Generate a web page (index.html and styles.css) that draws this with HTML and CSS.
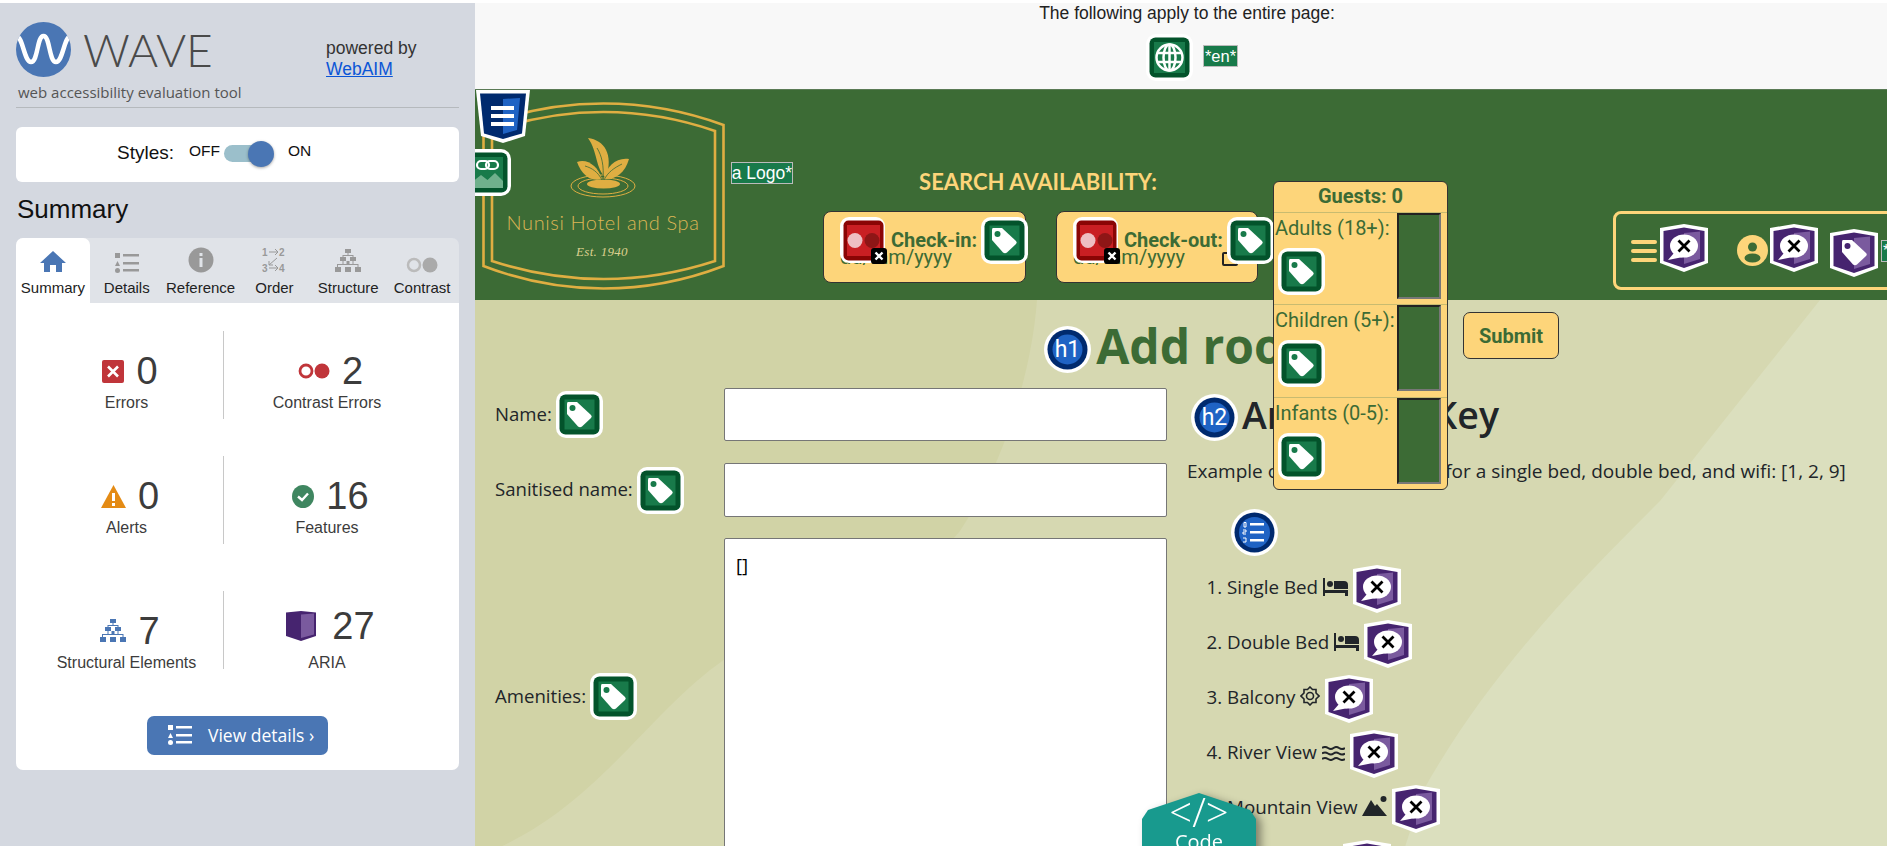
FILE: index.html
```html
<!DOCTYPE html>
<html lang="en">
<head>
  <meta charset="UTF-8" />
  <meta name="viewport" content="width=device-width, initial-scale=1.0" />
  <title>WAVE - Add room</title>
  <link rel="stylesheet" href="styles.css">
</head>
<body>
  <svg class="sprites" width="0" height="0" aria-hidden="true">
    <symbol id="i-tag" viewBox="0 0 47 47">
      <rect x="0" y="0" width="47" height="47" rx="10" fill="#fff"/>
      <rect x="3.500" y="3.500" width="40" height="40" rx="6" fill="#03532b"/>
      <rect x="8.500" y="8.500" width="30" height="30" fill="#187a4a"/>
      <path d="M12 11H21L35 24Q36.500 25.500 35 27L26 35.500Q24 37 22 35.500L11 23V13Q11 11 12 11Z" fill="#fff"/>
      <circle cx="16.500" cy="17" r="3" fill="#187a4a"/>
    </symbol>
    <symbol id="i-contrast" viewBox="0 0 47 47">
      <rect x="0" y="0" width="45" height="46" rx="9" fill="#fff"/>
      <rect x="3.500" y="3.500" width="40" height="40" rx="5" fill="#8a0505"/>
      <rect x="7" y="8" width="33" height="31" fill="#c91f23"/>
      <circle cx="15" cy="23.500" r="7.500" fill="#eebfc3"/>
      <circle cx="32" cy="23.500" r="7.500" fill="#8e1616"/>
      <rect x="31" y="31" width="16" height="16" rx="3" fill="#000"/>
      <path d="M35.500 35.500L42.500 42.500M42.500 35.500L35.500 42.500" stroke="#fff" stroke-width="2.400"/>
    </symbol>
    <symbol id="i-aria-x" viewBox="0 0 48 48">
      <path d="M0 4L24 0L48 4V39L24 48L0 39Z" fill="#fff"/>
      <path d="M3.500 7L24 3.500L44.500 7V37L24 44L3.500 37Z" fill="#46246f"/>
      <path d="M24 9L40 7.500V35L24 40Z" fill="#7a5a9e"/>
      <ellipse cx="24" cy="22" rx="14" ry="11.500" fill="#fff"/>
      <path d="M14 29L8 36L23 33Z" fill="#fff"/>
      <path d="M18.500 16.500L29.500 27.500M29.500 16.500L18.500 27.500" stroke="#000" stroke-width="2.800"/>
    </symbol>
    <symbol id="i-aria-tag" viewBox="0 0 48 48">
      <path d="M0 4L24 0L48 4V39L24 48L0 39Z" fill="#fff"/>
      <path d="M3.500 7L24 3.500L44.500 7V37L24 44L3.500 37Z" fill="#46246f"/>
      <path d="M24 9L40 7.500V35L24 40Z" fill="#7a5a9e"/>
      <path d="M13 11H22L36 24Q37.500 25.500 36 27L27 35.500Q25 37 23 35.500L12 23V13Q12 11 13 11Z" fill="#fff"/>
      <circle cx="17.500" cy="17" r="3" fill="#46246f"/>
    </symbol>
    <symbol id="i-list" viewBox="0 0 24 20">
      <rect x="0" y="0" width="5" height="5"/>
      <path d="M2.500 8L5 13H0Z"/>
      <circle cx="2.500" cy="17.500" r="2.500"/>
      <rect x="8" y="1" width="16" height="2.500"/>
      <rect x="8" y="9" width="16" height="2.500"/>
      <rect x="8" y="16" width="16" height="2.500"/>
    </symbol>
    <symbol id="i-tree" viewBox="0 0 26 24">
      <path d="M10 0h6v4h-6zM5 8h6v4H5zM15 8h6v4h-6zM0 18h6v5H0zM10 18h6v5h-6zM20 18h6v5h-6z"/>
      <path d="M12.500 4h1v2h5v2h-1V7h-9v1h-1V6h5zM7.500 12h1v3h3v-3h3v3h3v-3h1v3h5v3h-1v-2H3v2H2v-3h5.500z"/>
    </symbol>
  </svg>

  <aside class="wave-panel">
    <div class="brand">
      <div class="brand-main">
        <div class="brand-logo">
          <svg class="wave-circle" width="55" height="55" viewBox="0 0 55 55">
            <clipPath id="circle-clip"><circle cx="27.500" cy="27.500" r="27.500"/></clipPath>
            <circle cx="27.500" cy="27.500" r="27.500" fill="#4a76b4"/>
            <path clip-path="url(#circle-clip)" d="M0 14C7 14 8 40 15 40C22 40 21 14 27.500 14C34 14 33 40 40 40C47 40 48 14 55 14" fill="none" stroke="#fff" stroke-width="4.500"/>
          </svg>
          <span class="wave-name">WAVE</span>
        </div>
        <div class="wave-tag">web accessibility evaluation tool</div>
      </div>
      <div class="powered">powered by<br><a href="#">WebAIM</a></div>
    </div>

    <div class="styles-card">
      <span class="styles-label">Styles:</span>
      <span class="styles-off">OFF</span>
      <span class="toggle"><span class="toggle-thumb"></span></span>
      <span class="styles-on">ON</span>
    </div>

    <h2 class="panel-title">Summary</h2>

    <nav class="tabs">
      <div class="tab tab-active">
        <svg width="26" height="22" viewBox="0 0 26 22" fill="#4a76b4"><path d="M13 0L26 12H22V21H16V14H10V21H4V12H0Z"/></svg>
        <span>Summary</span>
      </div>
      <div class="tab">
        <svg width="24" height="20" fill="#999"><use href="#i-list"/></svg>
        <span>Details</span>
      </div>
      <div class="tab">
        <svg width="26" height="26" viewBox="0 0 26 26"><circle cx="13" cy="13" r="12.500" fill="#999"/><rect x="11.500" y="11" width="3" height="9" fill="#e0e3e8"/><rect x="11.500" y="6" width="3" height="3" fill="#e0e3e8"/></svg>
        <span>Reference</span>
      </div>
      <div class="tab">
        <svg width="24" height="26" viewBox="0 0 24 26" fill="#999">
          <text x="0" y="9" class="order-num">1</text><text x="17" y="9" class="order-num">2</text>
          <text x="0" y="25" class="order-num">3</text><text x="17" y="25" class="order-num">4</text>
          <path d="M7 5H16M13 2L16 5L13 8M7 21H16M13 18L16 21L13 24M15 11L7 18M7 14V18H11" fill="none" stroke="#999" stroke-width="1"/>
        </svg>
        <span>Order</span>
      </div>
      <div class="tab">
        <svg width="26" height="24" fill="#999"><use href="#i-tree"/></svg>
        <span>Structure</span>
      </div>
      <div class="tab">
        <svg width="32" height="16" viewBox="0 0 32 16"><circle cx="8" cy="8" r="6" fill="none" stroke="#bbb" stroke-width="2.500"/><circle cx="24" cy="8" r="7.500" fill="#aaa"/></svg>
        <span>Contrast</span>
      </div>
    </nav>

    <div class="summary-card">
      <div class="stats">
        <div class="stat">
          <div class="stat-top">
            <svg width="22" height="23" viewBox="0 0 22 23"><rect width="22" height="23" rx="2" fill="#c0353a"/><path d="M6 6.500L16 16.500M16 6.500L6 16.500" stroke="#fff" stroke-width="2.600"/></svg>
            <span class="stat-num">0</span>
          </div>
          <div class="stat-label">Errors</div>
        </div>
        <div class="stat stat-right">
          <div class="stat-top">
            <svg width="32" height="16" viewBox="0 0 32 16"><circle cx="8" cy="8" r="6" fill="none" stroke="#c0353a" stroke-width="2.800"/><circle cx="24" cy="8" r="7.500" fill="#c0353a"/></svg>
            <span class="stat-num">2</span>
          </div>
          <div class="stat-label">Contrast Errors</div>
        </div>
        <div class="stat">
          <div class="stat-top">
            <svg width="25" height="23" viewBox="0 0 25 23"><path d="M12.500 0L25 23H0Z" fill="#e48b15"/><rect x="11" y="8" width="3" height="8" fill="#fff"/><rect x="11" y="18" width="3" height="3" fill="#fff"/></svg>
            <span class="stat-num">0</span>
          </div>
          <div class="stat-label">Alerts</div>
        </div>
        <div class="stat stat-right">
          <div class="stat-top">
            <svg width="22" height="23" viewBox="0 0 22 23"><ellipse cx="11" cy="11.500" rx="11" ry="11.500" fill="#3f8660"/><path d="M6 11.500L10 15L16 8.500" fill="none" stroke="#fff" stroke-width="2.400"/></svg>
            <span class="stat-num">16</span>
          </div>
          <div class="stat-label">Features</div>
        </div>
        <div class="stat stat-last">
          <div class="stat-top">
            <svg width="26" height="24" fill="#4a76b4"><use href="#i-tree"/></svg>
            <span class="stat-num">7</span>
          </div>
          <div class="stat-label">Structural Elements</div>
        </div>
        <div class="stat stat-right stat-last">
          <div class="stat-top stat-top-aria">
            <svg width="30" height="30" viewBox="0 0 30 30"><path d="M0 1.500L15 0L30 1.500V25L15 30L0 25Z" fill="#46246f"/><path d="M15 3.500L28 2.500V23.500L15 27Z" fill="#7a5a9e"/></svg>
            <span class="stat-num">27</span>
          </div>
          <div class="stat-label">ARIA</div>
        </div>
      </div>
      <a class="details-btn" href="#">
        <svg width="24" height="20" fill="#fff"><use href="#i-list"/></svg>
        <span>View details ›</span>
      </a>
    </div>
  </aside>

  <main class="page">
    <div class="page-notes">
      <div class="page-notes-text">The following apply to the entire page:</div>
      <div class="page-notes-row">
        <svg class="wave-icon" width="47" height="47" viewBox="0 0 47 47">
          <rect width="47" height="47" rx="10" fill="#fff"/>
          <rect x="3.500" y="3.500" width="40" height="40" rx="6" fill="#03532b"/>
          <rect x="8" y="8" width="31" height="31" fill="#187a4a"/>
          <g fill="none" stroke="#fff" stroke-width="2.500">
            <circle cx="23.500" cy="23.500" r="13"/>
            <ellipse cx="23.500" cy="23.500" rx="6" ry="13"/>
            <path d="M23.500 10V37M11 19H36M11 28H36"/>
          </g>
        </svg>
        <span class="alt-badge">*en*</span>
      </div>
    </div>

    <header class="site-header">
      <div class="logo-wrap">
        <svg class="hotel-logo" width="243" height="188" viewBox="0 0 243 188">
          <g fill="none" stroke="#dfae42" stroke-width="2.600">
            <path d="M1.500 23Q60 1.500 121.500 1.500Q183 1.500 241.500 23V164Q183 186.500 121.500 186.500Q60 186.500 1.500 164Z"/>
            <path d="M10 29Q65 10 121.500 10Q178 10 233 29V159Q178 177 121.500 177Q65 177 10 159Z"/>
          </g>
          <g fill="none" stroke="#dfae42" stroke-width="1">
            <ellipse cx="121" cy="84" rx="25" ry="8"/>
            <ellipse cx="121" cy="84" rx="32" ry="11"/>
          </g>
          <g fill="#dfae42">
            <path d="M106 36C122 38 132 52 124 76C113 66 116 50 106 36Z"/>
            <path d="M95 60C105 56 116 64 120 77C110 80 100 74 95 60Z"/>
            <path d="M147 57C135 55 124 64 122 77C132 78 143 72 147 57Z"/>
            <ellipse cx="121.500" cy="82" rx="16.500" ry="4.500"/>
          </g>
          <path d="M115 46C120 54 122 64 121 78M103 64C110 66 116 70 120 78M140 62C132 66 126 70 122 78" fill="none" stroke="#3c6b35" stroke-width=".8"/>
          <text x="121" y="128" text-anchor="middle" class="logo-name">Nunisi Hotel and Spa</text>
          <text x="120" y="154" text-anchor="middle" class="logo-est">Est. 1940</text>
        </svg>
        <svg class="wave-icon badge-landmark" width="54" height="53" viewBox="0 0 54 53">
          <path d="M0 0H54L49 46L27 53L5 46Z" fill="#fff"/>
          <path d="M4 3.500H50L46 43.500L27 49L8 43.500Z" fill="#002a6e"/>
          <path d="M27 9L44 8L41 40L27 44Z" fill="#1f63c4"/>
          <path d="M15 16H38V20H15ZM15 24H38V28H15ZM15 32H38V36H15Z" fill="#fff"/>
        </svg>
        <svg class="wave-icon badge-linked" width="47" height="47" viewBox="0 0 47 47">
          <rect width="47" height="47" rx="10" fill="#fff"/>
          <rect x="3.500" y="3.500" width="40" height="40" rx="6" fill="#03532b"/>
          <rect x="8" y="8" width="31" height="31" fill="#187a4a"/>
          <path d="M8 33L17 26L23.500 31L31 24L39 32V39H8Z" fill="#6fb08c"/>
          <g fill="none" stroke="#fff" stroke-width="2.200"><rect x="13" y="12" width="12" height="8" rx="4"/><rect x="22" y="12" width="12" height="8" rx="4"/></g>
        </svg>
        <span class="alt-badge alt-logo"><span>*Nunisi Hotel and Spa Logo*</span></span>
      </div>

      <div class="search">
        <div class="search-title">SEARCH AVAILABILITY:</div>
        <div class="search-dates">
          <div class="date-box">
            <div class="date-label-row">
              <svg class="wave-icon" width="47" height="47"><use href="#i-contrast"/></svg>
              <span class="date-label">Check-in:</span>
              <svg class="wave-icon" width="47" height="47"><use href="#i-tag"/></svg>
            </div>
            <div class="date-value">dd/mm/yyyy</div>
          </div>
          <div class="date-box date-box-out">
            <div class="date-label-row">
              <svg class="wave-icon" width="47" height="47"><use href="#i-contrast"/></svg>
              <span class="date-label">Check-out:</span>
              <svg class="wave-icon" width="47" height="47"><use href="#i-tag"/></svg>
            </div>
            <div class="date-value">dd/mm/yyyy</div>
            <span class="calendar"></span>
          </div>
        </div>
      </div>

      <div class="site-nav">
        <span class="burger"><i></i><i></i><i></i></span>
        <svg class="wave-icon nav-aria" width="48" height="48"><use href="#i-aria-x"/></svg>
        <svg class="nav-user" width="31" height="31" viewBox="0 0 31 31">
          <circle cx="15.500" cy="15.500" r="15.500" fill="#fdd57a"/>
          <circle cx="15.500" cy="12" r="4.500" fill="#3c6b35"/>
          <ellipse cx="15.500" cy="23" rx="8" ry="4.500" fill="#3c6b35"/>
        </svg>
        <svg class="wave-icon nav-aria-close" width="48" height="48"><use href="#i-aria-x"/></svg>
        <svg class="wave-icon nav-aria-tag" width="48" height="48"><use href="#i-aria-tag"/></svg>
        <span class="alt-badge nav-alt">*Nunisi*</span>
      </div>
    </header>

    <section class="content">
      <svg class="content-bg" width="1412" height="547" viewBox="0 0 1412 547">
        <path d="M562 0C556 80 525 170 485 231C425 301 325 311 250 359C175 411 125 501 25 547H1412V0Z" fill="#d6d8b1"/>
        <path d="M1345 0L1185 201C1105 281 1015 371 948 491L930 547H1412V0Z" fill="#dbdfbe"/>
      </svg>

      <div class="title-row">
        <svg class="wave-icon title-badge" width="47" height="47" viewBox="0 0 47 47">
          <circle cx="23.500" cy="23.500" r="23.500" fill="#fff"/>
          <circle cx="23.500" cy="23.500" r="20" fill="#002a6e"/>
          <circle cx="23.500" cy="23.500" r="15" fill="#1f63c4"/>
          <text x="23.500" y="31" text-anchor="middle" class="badge-text">h1</text>
        </svg>
        <h1>Add room</h1>
      </div>

      <div class="columns">
        <form class="room-form" onsubmit="event.preventDefault();">
          <label class="field-label" for="name"><span class="field-text">Name:</span> <svg class="wave-icon" width="47" height="47"><use href="#i-tag"/></svg></label>
          <input class="field-input" type="text" id="name" />
          <label class="field-label" for="sanitised"><span class="field-text">Sanitised name:</span> <svg class="wave-icon" width="47" height="47"><use href="#i-tag"/></svg></label>
          <input class="field-input" type="text" id="sanitised" />
          <label class="field-label" for="amenities"><span class="field-text">Amenities:</span> <svg class="wave-icon" width="47" height="47"><use href="#i-tag"/></svg></label>
          <textarea class="field-area" id="amenities">[]</textarea>
        </form>

        <div class="key">
          <div class="key-title">
            <svg class="wave-icon" width="47" height="47" viewBox="0 0 47 47">
              <circle cx="23.500" cy="23.500" r="23.500" fill="#fff"/>
              <circle cx="23.500" cy="23.500" r="20" fill="#002a6e"/>
              <circle cx="23.500" cy="23.500" r="15" fill="#1f63c4"/>
              <text x="23.500" y="31" text-anchor="middle" class="badge-text">h2</text>
            </svg>
            <h2>Amenities Key</h2>
          </div>
          <p class="key-text">Example of an amenity array for a single bed, double bed, and wifi: [1, 2, 9]</p>
          <svg class="wave-icon key-list-badge" width="47" height="47" viewBox="0 0 47 47">
            <circle cx="23.500" cy="23.500" r="23.500" fill="#fff"/>
            <circle cx="23.500" cy="23.500" r="20" fill="#002a6e"/>
            <circle cx="23.500" cy="23.500" r="15.500" fill="#1f63c4"/>
            <path d="M19 14H33V16.500H19ZM19 22H33V24.500H19ZM19 30H33V32.500H19Z" fill="#fff"/>
            <path d="M13 13.500H15V18H13ZM12 21H15V23H12V25H15M12 29H15V33H12" fill="none" stroke="#fff" stroke-width="1"/>
          </svg>
          <ol class="key-list">
            <li>Single Bed
              <svg class="amenity" width="25" height="18" viewBox="0 0 25 18" fill="#212529"><path d="M0 0H2V12H25V18H22V15H2V18H0Z"/><circle cx="7" cy="6" r="3"/><path d="M11 3H21Q25 3 25 7V11H11Z"/></svg>
              <svg class="wave-icon" width="48" height="48"><use href="#i-aria-x"/></svg>
            </li>
            <li>Double Bed
              <svg class="amenity" width="25" height="18" viewBox="0 0 25 18" fill="#212529"><path d="M0 0H2V12H25V18H22V15H2V18H0Z"/><circle cx="7" cy="6" r="3"/><path d="M11 3H21Q25 3 25 7V11H11Z"/></svg>
              <svg class="wave-icon" width="48" height="48"><use href="#i-aria-x"/></svg>
            </li>
            <li>Balcony
              <svg class="amenity" width="20" height="20" viewBox="0 0 20 20" fill="none" stroke="#212529" stroke-width="1.600"><path d="M10 1L12.500 3.500H16V7L19 10L16 13V16.500H12.500L10 19L7.500 16.500H4V13L1 10L4 7V3.500H7.500Z"/><circle cx="10" cy="10" r="3.500"/></svg>
              <svg class="wave-icon" width="48" height="48"><use href="#i-aria-x"/></svg>
            </li>
            <li>River View
              <svg class="amenity" width="23" height="15" viewBox="0 0 23 15" fill="none" stroke="#212529" stroke-width="2"><path d="M0 2Q3 0 6 2T11.500 2T17 2T23 2M0 7.500Q3 5.500 6 7.500T11.500 7.500T17 7.500T23 7.500M0 13Q3 11 6 13T11.500 13T17 13T23 13"/></svg>
              <svg class="wave-icon" width="48" height="48"><use href="#i-aria-x"/></svg>
            </li>
            <li>Mountain View
              <svg class="amenity" width="25" height="20" viewBox="0 0 25 20" fill="#212529"><path d="M0 20L9 4L13 10L15 8L25 20Z"/><circle cx="21.500" cy="3" r="3"/></svg>
              <svg class="wave-icon" width="48" height="48"><use href="#i-aria-x"/></svg>
            </li>
            <li>Garden View
              <svg class="wave-icon" width="48" height="48"><use href="#i-aria-x"/></svg>
            </li>
          </ol>
        </div>
      </div>
    </section>

    <div class="guests">
      <div class="guests-head">Guests: 0</div>
      <div class="guest-row">
        <div class="guest-label">Adults (18+):<svg class="wave-icon" width="47" height="47"><use href="#i-tag"/></svg></div>
        <span class="guest-input"></span>
      </div>
      <div class="guest-row guest-row-tall">
        <div class="guest-label">Children (5+):<svg class="wave-icon" width="47" height="47"><use href="#i-tag"/></svg></div>
        <span class="guest-input"></span>
      </div>
      <div class="guest-row">
        <div class="guest-label">Infants (0-5):<svg class="wave-icon" width="47" height="47"><use href="#i-tag"/></svg></div>
        <span class="guest-input"></span>
      </div>
    </div>
    <button class="submit-btn" type="button">Submit</button>

    <div class="code-tab">
      <div class="code-shape">
        <span class="code-glyph">&lt;/&gt;</span>
        <span class="code-word">Code</span>
      </div>
    </div>
  </main>
</body>
</html>
```

FILE: styles.css
```css
* {
  box-sizing: border-box;
}
html, body {
  margin: 0;
  height: 846px;
  overflow: hidden;
}
body {
  background: #fff;
  padding-top: 3px;
  display: flex;
  font-family: "Liberation Sans", Arial, sans-serif;
}
.sprites {
  position: absolute;
}
.wave-icon {
  flex-shrink: 0;
  display: inline-block;
  vertical-align: middle;
}

/* wave sidebar */
.wave-panel {
  width: 475px;
  flex-shrink: 0;
  height: 843px;
  background: #d4d8e0;
  padding: 0 16px;
  position: relative;
  z-index: 5;
}
.brand {
  height: 105px;
  border-bottom: 1px solid #b5b9bd;
  display: flex;
  padding-top: 19px;
}
.brand-main {
  width: 310px;
}
.brand-logo {
  display: flex;
  align-items: center;
  gap: 12px;
  height: 55px;
}
.wave-name {
  font-family: Lato, sans-serif;
  font-weight: 300;
  font-size: 46px;
  color: #4a4a4a;
}
.wave-tag {
  font-family: "Open Sans", sans-serif;
  font-size: 15px;
  color: #555;
  margin: 5px 0 0 2px;
}
.powered {
  font-size: 17.500px;
  line-height: 21px;
  color: #333;
  padding-top: 16px;
}
.powered a {
  color: #0b55d6;
}
.styles-card {
  margin-top: 19px;
  height: 55px;
  background: #fff;
  border-radius: 6px;
  display: flex;
  align-items: center;
  padding: 0 0 3px 101px;
  color: #111;
}
.styles-label {
  font-size: 19px;
  width: 72px;
}
.styles-off, .styles-on {
  font-size: 15.500px;
  margin-top: -4px;
}
.styles-off {
  width: 35px;
}
.styles-on {
  margin-left: 18px;
}
.toggle {
  width: 46px;
  height: 17px;
  background: #9bbfcb;
  border-radius: 9px;
  position: relative;
}
.toggle-thumb {
  position: absolute;
  right: -4px;
  top: -4px;
  width: 26px;
  height: 26px;
  border-radius: 50%;
  background: #4a76b4;
  box-shadow: 0 1px 3px rgba(0,0,0,.35);
}
.panel-title {
  font-weight: normal;
  font-size: 26px;
  color: #111;
  margin: 12px 0 0 1px;
  line-height: 30px;
}
.tabs {
  margin-top: 14px;
  height: 65px;
  display: grid;
  grid-template-columns: repeat(6, 1fr);
  background: #e0e3e8;
  border-radius: 7px 7px 0 0;
}
.tab {
  display: flex;
  flex-direction: column;
  align-items: center;
  justify-content: flex-end;
  font-size: 15px;
  color: #222;
  white-space: nowrap;
  padding-bottom: 7px;
  gap: 6px;
}
.tab svg {
  flex-shrink: 0;
}
.tab-active {
  background: #fff;
  border-radius: 7px 7px 0 0;
}
.order-num {
  font: bold 10px "Liberation Sans", sans-serif;
}
.summary-card {
  background: #fff;
  border-radius: 0 0 7px 7px;
  height: 467px;
  padding-top: 28px;
}
.stats {
  display: grid;
  grid-template-columns: 193px 207px;
  grid-template-rows: 88px 88px 88px;
  row-gap: 37px;
  margin-left: 14px;
}
.stat {
  display: flex;
  flex-direction: column;
  align-items: center;
  color: #3c3c3c;
  padding-top: 19px;
}
.stat-last {
  margin-top: 10px;
}
.stat-right {
  border-left: 1px solid #c8c8c8;
}
.stat-top {
  display: flex;
  align-items: center;
  gap: 12px;
  height: 42px;
  margin-left: 7px;
}
.stat-top-aria {
  gap: 16px;
  margin-top: -5px;
  margin-bottom: 5px;
}
.stat-num {
  font-size: 38px;
  line-height: 42px;
}
.stat-label {
  font-size: 16px;
  line-height: 20px;
  margin-top: 1px;
}
.details-btn {
  margin: 47px auto 0;
  width: 181px;
  height: 39px;
  background: #4a76b4;
  border-radius: 7px;
  display: flex;
  align-items: center;
  gap: 16px;
  padding: 0 0 1px 21px;
  color: #fff;
  text-decoration: none;
  font-family: "Open Sans", sans-serif;
  font-size: 17.500px;
  white-space: nowrap;
}

/* page under test */
.page {
  flex: 1;
  min-width: 0;
  height: 843px;
  position: relative;
  overflow: hidden;
  background: #f8f8f8;
}
.page-notes {
  height: 86px;
  display: flex;
  flex-direction: column;
  align-items: center;
  font-size: 17.500px;
  color: #222;
}
.page-notes-text {
  margin-left: 12px;
}
.page-notes-row {
  display: flex;
  align-items: center;
  gap: 10px;
  margin-top: 10px;
  padding-left: 22px;
}
.alt-badge {
  background: #187a4a;
  color: #fff;
  font-size: 16.500px;
  border: 1px solid #bbb;
  line-height: 20px;
  white-space: nowrap;
  padding: 0 1px;
  margin-top: -4px;
}
.site-header {
  height: 211px;
  background: #3c6b35;
  border-top: 1px solid #5a7a55;
  display: flex;
  position: relative;
}
.logo-wrap {
  width: 243px;
  margin: 12px 0 0 7px;
  flex-shrink: 0;
  position: relative;
}
.hotel-logo {
  display: block;
}
.logo-name {
  font: 300 20px Lato, sans-serif;
  letter-spacing: .6px;
  fill: #dcb655;
}
.logo-est {
  font: italic 13px "Liberation Serif", serif;
  letter-spacing: .3px;
  fill: #dcd08f;
}
.badge-landmark {
  position: absolute;
  left: -6px;
  top: -12px;
}
.badge-linked {
  position: absolute;
  left: -18px;
  top: 47px;
}
.alt-logo {
  position: absolute;
  left: 249px;
  top: 60px;
  width: 62px;
  height: 22px;
  display: flex;
  justify-content: flex-end;
  overflow: hidden;
  margin: 0;
  padding: 0;
  font-size: 17.500px;
}
.search {
  margin-left: 98px;
  width: 435px;
  flex-shrink: 0;
}
.search-title {
  font-family: Lato, sans-serif;
  font-weight: 700;
  font-size: 22px;
  color: #fdd57a;
  text-align: center;
  margin-top: 78px;
  line-height: 28px;
  padding-right: 5px;
}
.search-dates {
  display: flex;
  justify-content: space-between;
  margin-top: 15px;
}
.date-box {
  width: 203px;
  height: 72px;
  background: #fdd57a;
  border: 1px solid #333;
  border-radius: 8px;
  padding: 5px 0 0 16px;
  position: relative;
  font-family: Roboto, sans-serif;
  color: #3c6b35;
}
.date-box-out {
  width: 202px;
}
.date-label-row {
  display: flex;
  align-items: center;
  gap: 4px;
  position: relative;
  z-index: 2;
  white-space: nowrap;
  width: 188px;
}
.date-box-out .date-label-row {
  width: 201px;
}
.date-label {
  font-weight: 700;
  font-size: 20px;
  flex: 1;
  margin-top: -1px;
}
.date-value {
  font-size: 20px;
  line-height: 24px;
  margin-top: -19px;
}
.calendar {
  position: absolute;
  left: 165px;
  top: 40px;
  width: 16px;
  height: 14px;
  border: 2px solid #222;
  border-radius: 2px;
}
.site-nav {
  margin: 121px 0 0 355px;
  width: 300px;
  height: 79px;
  flex-shrink: 0;
  border: 3px solid #fdd57a;
  border-radius: 8px;
  display: flex;
  align-items: center;
  padding-left: 15px;
  position: relative;
}
.burger {
  width: 26px;
  display: flex;
  flex-direction: column;
  gap: 5px;
  flex-shrink: 0;
}
.burger i {
  display: block;
  height: 4px;
  border-radius: 2px;
  background: #fdd57a;
}
.nav-aria {
  margin: -5px 0 0 3px;
}
.nav-user {
  margin-left: 29px;
  flex-shrink: 0;
}
.nav-aria-close {
  margin: -5px 0 0 2px;
}
.nav-aria-tag {
  margin: 5px 0 0 12px;
}
.nav-alt {
  margin: 0 0 0 3px;
  font-size: 16px;
}

/* main content */
.content {
  position: relative;
  height: 546px;
  background: #d1d3a6;
  color: #212529;
  font-family: "Open Sans", sans-serif;
}
.content-bg {
  position: absolute;
  left: 0;
  top: 0;
}
.title-row {
  position: relative;
  display: flex;
  align-items: center;
  justify-content: center;
  gap: 5px;
  height: 73px;
  margin-left: 13px;
  padding-top: 18px;
}
.title-badge {
  margin-top: 7px;
}
h1 {
  margin: 0;
  font-size: 48px;
  font-weight: 700;
  color: #3c6b35;
  line-height: 60px;
}
.badge-text {
  font: 400 23px Roboto, sans-serif;
  fill: #fff;
}
.columns {
  position: relative;
  display: flex;
  margin-top: 15px;
  padding-left: 20px;
}
.room-form {
  width: 672px;
  flex-shrink: 0;
  display: grid;
  grid-template-columns: 229px 443px;
  grid-template-rows: 53px 54px 400px;
  row-gap: 22px;
  align-items: center;
}
.field-label {
  font-size: 18.600px;
  display: flex;
  align-items: center;
  gap: 4px;
  white-space: nowrap;
}
.field-text {
  margin-bottom: 3px;
}
.field-input, .field-area {
  width: 100%;
  height: 100%;
  background: #fff;
  border: 1px solid #767676;
  border-radius: 2px;
  margin: 0;
}
.field-area {
  align-self: start;
  font-family: "Open Sans", sans-serif;
  font-size: 18.600px;
  padding: 13px 11px;
  margin-top: -1px;
  resize: none;
  color: #000;
  height: 400px;
}
.room-form label:nth-of-type(3) {
  align-self: start;
  margin-top: 134px;
}
.key {
  margin-left: 20px;
  min-width: 0;
  flex: 1;
}
.key-title {
  display: flex;
  align-items: center;
  gap: 4px;
  margin: 7px 0 0 4px;
  height: 44px;
}
h2 {
  margin: 0 0 6px;
  font-size: 37.500px;
  font-weight: 600;
  white-space: nowrap;
}
.key-text {
  margin: 19px 0 0;
  font-size: 19px;
  white-space: nowrap;
}
.key-list-badge {
  display: block;
  margin: 25px 0 0 44px;
}
.key-list {
  margin: 4px 0 0;
  padding-left: 40px;
  font-size: 18.800px;
}
.key-list li {
  height: 55px;
  line-height: 55px;
  white-space: nowrap;
}
.amenity {
  vertical-align: -2px;
}

/* overlays */
.guests {
  position: absolute;
  left: 798px;
  top: 178px;
  width: 175px;
  height: 309px;
  background: #fdd57a;
  border: 1px solid #333;
  border-radius: 6px;
  font-family: Roboto, sans-serif;
  color: #3c6b35;
  z-index: 3;
}
.guests-head {
  height: 30px;
  line-height: 29px;
  text-align: center;
  font-weight: 700;
  font-size: 20px;
}
.guest-row {
  display: flex;
  justify-content: space-between;
  border-top: 1px solid #c8bb70;
  height: 92px;
  padding: 0 6px 0 1px;
}
.guest-row-tall {
  height: 93px;
}
.guest-label {
  font-size: 20px;
  line-height: 30px;
  white-space: nowrap;
}
.guest-label .wave-icon {
  display: block;
  margin: 5px 0 0 3px;
}
.guest-input {
  width: 44px;
  height: 86px;
  background: #3c6b35;
  border: 2px solid #777;
  border-top-color: #222;
  border-left-color: #222;
}
.submit-btn {
  position: absolute;
  left: 988px;
  top: 309px;
  width: 96px;
  height: 47px;
  background: #fdd57a;
  color: #3c6b35;
  border: 1px solid #333;
  border-radius: 7px;
  font: 700 20px Roboto, sans-serif;
  z-index: 3;
}
.code-tab {
  position: absolute;
  left: 667px;
  top: 790px;
  width: 114px;
  height: 60px;
  filter: drop-shadow(5px 3px 4px rgba(0,0,0,.4));
  z-index: 4;
}
.code-shape {
  width: 100%;
  height: 100%;
  background: #189a8e;
  clip-path: polygon(0 26px, 6px 17px, 57px 0, 108px 17px, 114px 26px, 114px 60px, 0 60px);
  display: flex;
  flex-direction: column;
  align-items: center;
  color: #fff;
  font-family: "Open Sans", sans-serif;
}
.code-glyph {
  font-size: 40px;
  font-weight: 300;
  line-height: 38px;
  margin-top: 0;
}
.code-word {
  font-size: 20px;
  line-height: 22px;
  margin-top: 0;
}
```
